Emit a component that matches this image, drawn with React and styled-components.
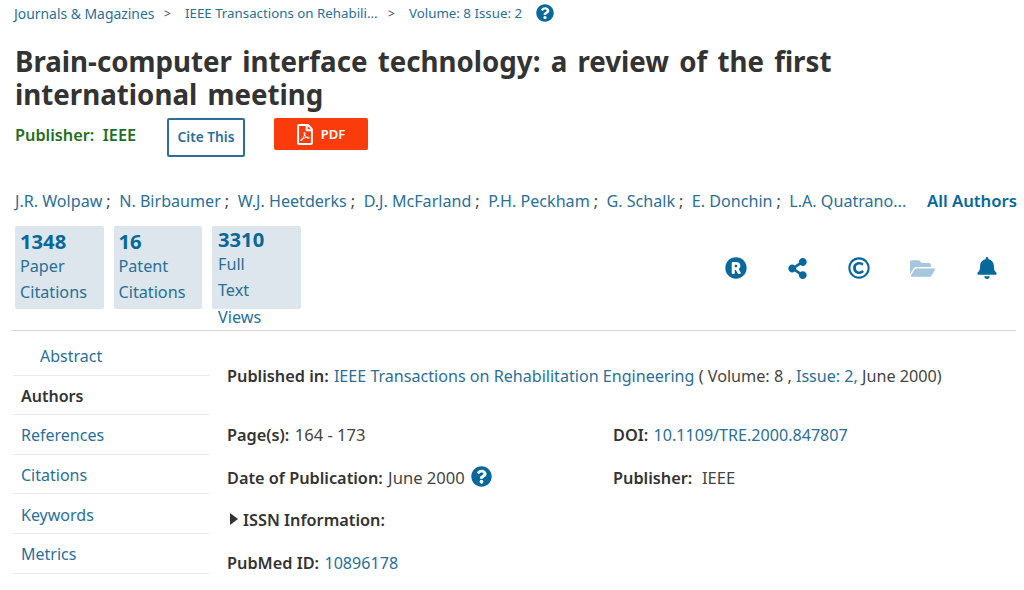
import React from 'react';
import styled, { createGlobalStyle } from 'styled-components';
import { FaQuestionCircle, FaShareAlt, FaRegCopyright, FaFolderOpen, FaBell, FaRegFilePdf, FaRegistered } from 'react-icons/fa';

const GlobalStyle = createGlobalStyle`
  html, body { margin: 0; padding: 0; background: #fff; }
  body { width: 1024px; height: 590px; overflow: hidden; font-family: "Noto Sans", "Open Sans", sans-serif; color: #333; }
`;

const BLUE = '#2a6f97';
const DARK_BLUE = '#06689b';

const Page = styled.div`
  width: 1024px;
  height: 590px;
  box-sizing: border-box;
  padding-top: 3px;
`;

const Breadcrumbs = styled.nav`
  display: flex;
  align-items: center;
  height: 20px;
  padding-left: 14px;
  font-size: 13.3px;
  color: ${BLUE};
`;

const Crumb = styled.span`
  width: ${(p) => p.$w}px;
  font-size: ${(p) => p.$size || 13.3}px;
  white-space: nowrap;
`;

const Caret = styled.span`
  width: ${(p) => p.$w}px;
  color: #444;
  font-size: 12px;
`;

const HelpIcon = styled(FaQuestionCircle)`
  color: ${DARK_BLUE};
  width: ${(p) => p.$size}px;
  height: ${(p) => p.$size}px;
  flex: none;
  margin-left: ${(p) => (p.$inline ? '2px' : '0')};
  vertical-align: ${(p) => (p.$inline ? '-3px' : 'baseline')};
`;

const Title = styled.h1`
  margin: 22px 0 0 15px;
  font-size: 27.7px;
  line-height: 33px;
  font-weight: 700;
  word-spacing: 3px;
  color: #333;
  width: 900px;
`;

const ActionRow = styled.div`
  display: flex;
  align-items: flex-start;
  height: 39px;
  margin: 7px 0 0 15px;
`;

const Publisher = styled.div`
  width: 152px;
  padding-top: 6px;
  font-size: 16.3px;
  line-height: 22px;
  font-weight: 600;
  color: #1f6f1f;
`;

const CiteButton = styled.div`
  box-sizing: border-box;
  width: 78px;
  height: 39px;
  padding-bottom: 3px;
  border: 2px solid ${BLUE};
  border-radius: 2px;
  display: flex;
  align-items: center;
  justify-content: center;
  font-size: 13.7px;
  font-weight: 600;
  color: ${BLUE};
  margin-right: 29px;
`;

const PdfButton = styled.div`
  width: 94px;
  height: 32px;
  background: #fa3c0c;
  border-radius: 2px;
  display: flex;
  align-items: center;
  justify-content: center;
  gap: 8px;
  font-size: 13px;
  font-weight: 600;
  color: #fff;
  svg { width: 16px; height: 21px; }
`;

const AuthorRow = styled.div`
  display: flex;
  align-items: center;
  height: 24px;
  margin: 32px 7px 0 15px;
  font-size: 16.1px;
  color: ${BLUE};
  white-space: nowrap;
`;

const Sep = styled.span`
  color: #444;
  margin: 0 8.5px 0 4px;
`;

const AllAuthors = styled.span`
  margin-left: auto;
  padding-bottom: 2px;
  font-size: 16.7px;
  font-weight: 600;
  color: ${DARK_BLUE};
`;

const MetricsRow = styled.div`
  display: flex;
  align-items: flex-start;
  height: 104px;
  margin: 13px 0 0 15px;
`;

const MetricList = styled.div`
  display: flex;
  gap: 10px;
`;

const Metric = styled.div`
  box-sizing: border-box;
  width: 88.5px;
  height: 83px;
  padding: ${(p) => (p.$tall ? '2px' : '4px')} 0 0 ${(p) => (p.$tall ? '6px' : '5px')};
  background: #dce6ec;
  border-radius: 2px;
  color: ${BLUE};
  font-size: 16.2px;
`;

const MetricNumber = styled.div`
  font-size: 20.2px;
  line-height: 23px;
  font-weight: 700;
  color: ${DARK_BLUE};
`;

const MetricLabel = styled.div`
  line-height: 26.3px;
  width: 40px;
`;

const IconBar = styled.div`
  display: flex;
  align-items: center;
  margin: 30px 0 0 auto;
  padding-right: 6px;
  height: 24px;
`;

const IconSlot = styled.div`
  width: ${(p) => p.$w}px;
  display: flex;
  justify-content: center;
  color: ${(p) => p.$color || DARK_BLUE};
  svg { width: ${(p) => p.$size}px; height: ${(p) => p.$size}px; }
`;

const Rule = styled.hr`
  margin: 0 8px 0 11px;
  border: 0;
  border-top: 1px solid #d8d8d8;
`;

const Body = styled.div`
  display: flex;
  margin-top: 5px;
`;

const Sidebar = styled.ul`
  list-style: none;
  margin: 0 0 0 13px;
  padding: 0;
  width: 197px;
  flex: none;
`;

const SideItem = styled.li`
  box-sizing: border-box;
  height: 39.6px;
  padding: 2px 0 0 ${(p) => (p.$indent ? '27px' : '8px')};
  display: flex;
  align-items: center;
  border-bottom: 1px solid #ececec;
  font-size: 16px;
  font-weight: ${(p) => (p.$active ? 600 : 400)};
  color: ${(p) => (p.$active ? '#333' : BLUE)};
`;

const Details = styled.section`
  margin-left: 17px;
  font-size: 16.6px;
  color: #444;
  flex: 1;
`;

const PublishedIn = styled.div`
  height: 24px;
  line-height: 24px;
  margin: 28px 0 35px;
  font-size: 16.2px;
  white-space: nowrap;
`;

const DetailGrid = styled.div`
  display: grid;
  grid-template-columns: 386px 1fr;
  grid-auto-rows: 42.5px;
`;

const Field = styled.div`
  height: 24px;
  line-height: 24px;
  white-space: pre;
`;

const Label = styled.b`
  font-size: 16.3px;
  font-weight: 600;
  margin-right: 1px;
  color: #333;
`;

const Link = styled.span`
  font-size: 16.1px;
  color: ${BLUE};
`;

const Triangle = styled.span`
  display: inline-block;
  width: 0;
  height: 0;
  border-left: 8px solid #333;
  border-top: 6px solid transparent;
  border-bottom: 6px solid transparent;
  margin: 0 5px 1px 3px;
`;

const authors = ['J.R. Wolpaw', 'N. Birbaumer', 'W.J. Heetderks', 'D.J. McFarland', 'P.H. Peckham', 'G. Schalk', 'E. Donchin'];
const sections = ['Abstract', 'Authors', 'References', 'Citations', 'Keywords', 'Metrics'];

export default function App() {
  return (
    <Page>
      <GlobalStyle />
      <Breadcrumbs>
        <Crumb $w={150} $size={13.9}>Journals &amp; Magazines</Crumb>
        <Caret $w={21}>&gt;</Caret>
        <Crumb $w={203}>IEEE Transactions on Rehabili...</Crumb>
        <Caret $w={21}>&gt;</Caret>
        <Crumb $w={127}>Volume: 8 Issue: 2</Crumb>
        <HelpIcon $size={18} />
      </Breadcrumbs>

      <Title>Brain-computer interface technology: a review of the first international meeting</Title>

      <ActionRow>
        <Publisher>Publisher:&nbsp; IEEE</Publisher>
        <CiteButton>Cite This</CiteButton>
        <PdfButton><FaRegFilePdf />PDF</PdfButton>
      </ActionRow>

      <AuthorRow>
        {authors.map((name) => (
          <React.Fragment key={name}>
            {name}<Sep>;</Sep>
          </React.Fragment>
        ))}
        L.A. Quatrano...
        <AllAuthors>All Authors</AllAuthors>
      </AuthorRow>

      <MetricsRow>
        <MetricList>
          <Metric>
            <MetricNumber>1348</MetricNumber>
            <MetricLabel>Paper Citations</MetricLabel>
          </Metric>
          <Metric>
            <MetricNumber>16</MetricNumber>
            <MetricLabel>Patent Citations</MetricLabel>
          </Metric>
          <Metric $tall>
            <MetricNumber>3310</MetricNumber>
            <MetricLabel>Full Text Views</MetricLabel>
          </Metric>
        </MetricList>
        <IconBar>
          <IconSlot $w={61} $size={22}><FaRegistered /></IconSlot>
          <IconSlot $w={62} $size={21}><FaShareAlt /></IconSlot>
          <IconSlot $w={62} $size={22}><FaRegCopyright /></IconSlot>
          <IconSlot $w={65} $size={25} $color="#a5c6dc"><FaFolderOpen /></IconSlot>
          <IconSlot $w={63} $size={22}><FaBell /></IconSlot>
        </IconBar>
      </MetricsRow>

      <Rule />

      <Body>
        <Sidebar>
          {sections.map((s, i) => (
            <SideItem key={s} $indent={i === 0} $active={s === 'Authors'}>{s}</SideItem>
          ))}
        </Sidebar>
        <Details>
          <PublishedIn>
            <Label>Published in:</Label> <Link>IEEE Transactions on Rehabilitation Engineering</Link> ( Volume: 8 , <Link>Issue: 2,</Link> June 2000)
          </PublishedIn>
          <DetailGrid>
            <Field><Label>Page(s):</Label> 164 - 173</Field>
            <Field><Label>DOI:</Label> <Link>10.1109/TRE.2000.847807</Link></Field>
            <Field><Label>Date of Publication:</Label> June 2000 <HelpIcon $size={21} $inline /></Field>
            <Field><Label>Publisher:</Label>{'  '}IEEE</Field>
            <Field><Triangle /><Label>ISSN Information:</Label></Field>
            <Field />
            <Field><Label>PubMed ID:</Label> <Link>10896178</Link></Field>
          </DetailGrid>
        </Details>
      </Body>
    </Page>
  );
}
